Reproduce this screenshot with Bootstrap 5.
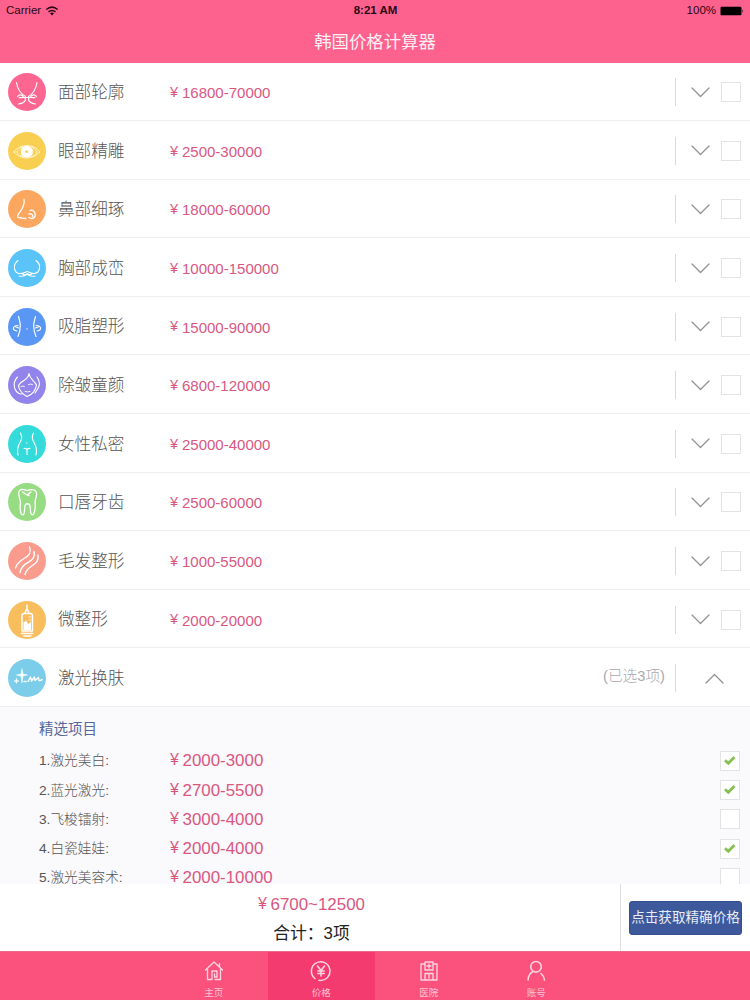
<!DOCTYPE html>
<html lang="zh-CN">
<head>
<meta charset="utf-8">
<meta name="viewport" content="width=device-width, initial-scale=1">
<title>韩国价格计算器</title>
<link href="https://cdn.jsdelivr.net/npm/bootstrap@5.3.0/dist/css/bootstrap.min.css" rel="stylesheet">
<style>
  body { font-family: "Liberation Sans", "Noto Sans CJK SC", sans-serif; height: 1000px; line-height: 1; color: #222; }
  svg { display: block; fill: none; stroke-linecap: round; stroke-linejoin: round; }
  .top-area { height: 62.5px; background: #fd628e; }
  .status-bar { height: 21px; font-size: 11.5px; padding: 0 5px 0 6px; color: #2a0713; }
  .status-bar > div { flex: 1 1 0; }
  .page-title { height: 41.5px; font-size: 17.4px; color: #fff0f5; padding-top: 1px; }
  .item-row { height: 58.6px; border-bottom: 1px solid #eeeeef; padding: 2px 9px 0 8px; }
  .disc { width: 38px; height: 38px; flex: none; stroke: #fff; stroke-width: 1.15; }
  .item-name { width: 112px; margin-left: 12px; padding-top: 2px; font-size: 16.6px; font-weight: 300; color: #555; }
  .price { color: #d9577f; font-size: 15px; }
  .yen { width: 12px; font-size: 14.5px; flex: none; padding-bottom: 1px; }
  .item-row .price { padding-top: 1px; }
  .rule { width: 1px; height: 28px; background: #d9d9dc; margin-right: 15px; }
  .chev { width: 19px; height: 11px; stroke: #929294; stroke-width: 1.3; margin-right: 11px; }
  .chev-open { margin: 0 17px 0 29px; }
  .tick-box { width: 20px; height: 20px; border: 1px solid #e3e3e6; background: #fff; flex: none; }
  .picked { font-size: 14.7px; color: #aaa8ad; font-weight: 300; margin-right: 10px; padding-bottom: 3px; }
  .detail { height: 176.9px; background: #faf9fc; padding: 0 10px 0 39px; }
  .detail-title { height: 39.2px; padding-top: 14px; font-size: 14.5px; color: #56679c; }
  .sub-row { height: 29.25px; }
  .sub-name { width: 131px; padding-top: 1px; font-size: 13.7px; font-weight: 300; color: #555; }
  .sub-row .price { font-size: 16.9px; padding-top: 2px; }
  .sub-row .yen, .total-sum .yen { width: 12.5px; font-size: 16px; padding-bottom: 3px; }
  .total-bar { height: 67.5px; }
  .total-sum { width: 621px; border-right: 1px solid #dedee0; padding: 6px 0 0 3px; }
  .total-sum .price { font-size: 16.9px; height: 32px; }
  .total-sum .count { font-size: 16.8px; height: 24px; color: #222; }
  .quote-btn.btn { width: 113px; height: 34px; background: #3e599b; border: 1px solid #344f91; border-radius: 3px; color: #e7ecf8; font-size: 13.6px; line-height: 1; white-space: nowrap; padding: 0; }
  .tab-bar { height: 48.5px; background: #fb527d; border-top: 1px solid #e9688b; }
  .tab-item { width: 107.5px; padding-top: 8px; color: #ffc6d6; font-size: 9.5px; text-decoration: none; }
  .tab-item.active { background: #f43b70; }
  .tab-item svg { width: 22px; height: 22px; stroke: #ffd5e1; stroke-width: 1.35; margin-bottom: 6px; }
</style>
</head>
<body class="bg-white overflow-hidden m-0">
<svg width="0" height="0" class="position-absolute">
  <symbol id="down" viewBox="0 0 19 11"><path d="M1 1l8.5 8.5L18 1"/></symbol>
  <symbol id="up" viewBox="0 0 19 11"><path d="M1 10l8.5-8.5L18 10"/></symbol>
  <symbol id="tick" viewBox="0 0 18 18"><path d="M4 8.300l3.300 3 6.200-6.300" stroke="#86c053" stroke-width="2.800" stroke-linecap="butt" stroke-linejoin="miter"/></symbol>
</svg>

<header class="top-area">
  <div class="status-bar d-flex align-items-center">
    <div class="d-flex align-items-center"><span>Carrier</span>
      <svg width="14" height="10" viewBox="0 0 14 10" stroke="#2a0713" stroke-width="1.500" class="ms-1"><path d="M1.300 3.500q5.700-4.700 11.400 0M3.500 5.900q3.500-2.900 7 0" stroke-linecap="butt"/><path d="M5 7.300q2-1.400 4 0L7 9.500z" fill="#2a0713" stroke="none"/></svg>
    </div>
    <span class="fw-bold">8:21 AM</span>
    <div class="d-flex align-items-center justify-content-end"><span>100%</span>
      <svg width="25" height="10" viewBox="0 0 25 10" class="ms-1"><rect x=".5" y=".8" width="21" height="8.400" rx="1.200" fill="#000"/><path d="M22.500 3.300q1.500 1.700 0 3.400z" fill="#000"/></svg>
    </div>
  </div>
  <h1 class="page-title d-flex align-items-center justify-content-center m-0 fw-normal">韩国价格计算器</h1>
</header>

<main>
  <div class="item-row d-flex align-items-center">
    <svg class="disc" viewBox="0 0 38 38"><circle cx="19" cy="19" r="19" fill="#fc6690" stroke="none"/><path d="M8.500 9.500C9.500 16 13 21 17.500 23.500M29 9.500C28 16 24.500 21 20.500 23.500M9.500 23.500c2-2.500 4.500-2 6 .5M28.500 23.500c-2-2.500-4.500-2-6 .5M11 24.500c3.500.8 6-1.500 6.500 1 .5 3-3 5-7 5.500M27 24.500c-3.500.8-6-1.500-6.500 1-.5 3 3 5 7 5.500M17 24.500h4"/></svg>
    <span class="item-name">面部轮廓</span><span class="price d-flex align-items-center"><span class="yen">¥</span>16800-70000</span>
    <span class="rule ms-auto"></span><svg class="chev"><use href="#down"/></svg><span class="tick-box"></span>
  </div>
  <div class="item-row d-flex align-items-center">
    <svg class="disc" viewBox="0 0 38 38"><circle cx="19" cy="19" r="19" fill="#f9cf51" stroke="none"/><g stroke="#fff8dc"><path d="M6 20C12 11.500 25 11 32 20 24 28 13 28 6 20z" stroke-width=".9"/><path d="M9 20q3-5 5.500-5.500-2.500 5 0 10.500Q11 24 9 20zM29 20q-3-5-5.500-5.500 2.500 5 0 10.500Q27 24 29 20z" stroke-width=".7"/></g><circle cx="18.700" cy="19.700" r="5.400" fill="#fff"/><circle cx="18.700" cy="19.700" r="1.400" fill="#f9cf51" stroke="none"/></svg>
    <span class="item-name">眼部精雕</span><span class="price d-flex align-items-center"><span class="yen">¥</span>2500-30000</span>
    <span class="rule ms-auto"></span><svg class="chev"><use href="#down"/></svg><span class="tick-box"></span>
  </div>
  <div class="item-row d-flex align-items-center">
    <svg class="disc" viewBox="0 0 38 38"><circle cx="19" cy="19" r="19" fill="#fba75f" stroke="none"/><path d="M16 9.500C17 15 14 19 10.500 24c-2 3-.5 3.700 2.500 3.800 1.500.2 3 1.200 5 .5M21 24c3-.8 4 1 3.500 2.500M22 20.500c4-1.500 6.500 4 4.500 6.500-1.500 2-4 1.500-5.500.5" stroke-width="1.300"/></svg>
    <span class="item-name">鼻部细琢</span><span class="price d-flex align-items-center"><span class="yen">¥</span>18000-60000</span>
    <span class="rule ms-auto"></span><svg class="chev"><use href="#down"/></svg><span class="tick-box"></span>
  </div>
  <div class="item-row d-flex align-items-center">
    <svg class="disc" viewBox="0 0 38 38"><circle cx="19" cy="19" r="19" fill="#5ac3f8" stroke="none"/><path d="M10 11.500C4 16 6 25 12.500 24.500c3.500 0 6-2 6.700-2s3.500 2 6.500 2C32 24.500 34 16 28 11.500M11 27q5 1 8-1.700 3.500 2.700 8 1.700M14.500 25q3 1.500 4.700-.5 2 2 4.500.5"/></svg>
    <span class="item-name">胸部成峦</span><span class="price d-flex align-items-center"><span class="yen">¥</span>10000-150000</span>
    <span class="rule ms-auto"></span><svg class="chev"><use href="#down"/></svg><span class="tick-box"></span>
  </div>
  <div class="item-row d-flex align-items-center">
    <svg class="disc" viewBox="0 0 38 38"><circle cx="19" cy="19" r="19" fill="#5a97f5" stroke="none"/><path d="M10.500 8.500c2 7 3 11-.5 20M27.500 8.500c-2 7-3 11 .5 20M10 17.500c-6 .5-6 4.500-1 5.500M28 17.500c6 .5 6 4.500 1 5.500M7 18.500l3.500 1.500M31 18.500L27.500 20"/><circle cx="19" cy="21" r=".2"/></svg>
    <span class="item-name">吸脂塑形</span><span class="price d-flex align-items-center"><span class="yen">¥</span>15000-90000</span>
    <span class="rule ms-auto"></span><svg class="chev"><use href="#down"/></svg><span class="tick-box"></span>
  </div>
  <div class="item-row d-flex align-items-center">
    <svg class="disc" viewBox="0 0 38 38"><circle cx="19" cy="19" r="19" fill="#9184ea" stroke="none"/><path d="M21 7.500C20.500 15 12 14 10.500 20c1 5 4 8 8.500 10.500C24 29 28 24 28.500 19 26 14 22 14 21 7.500M9.500 11C3 18 7 28 14 28M29 11c5 7 1 12-2 16"/><path d="M20.500 18.500q2-1 4 0M13 20.500q2-1 3.500 0M17 25.500q2.500 1 5 0" stroke-width=".9"/></svg>
    <span class="item-name">除皱童颜</span><span class="price d-flex align-items-center"><span class="yen">¥</span>6800-120000</span>
    <span class="rule ms-auto"></span><svg class="chev"><use href="#down"/></svg><span class="tick-box"></span>
  </div>
  <div class="item-row d-flex align-items-center">
    <svg class="disc" viewBox="0 0 38 38"><circle cx="19" cy="19" r="19" fill="#35dada" stroke="none"/><path d="M12.500 8C17 17 7 18 10 30M25.500 8C21 17 31 18 28 30M16 23.500q2.500-.5 3 1.500.5-2 3-1.500M19 25v4.500"/><circle cx="18.700" cy="18" r=".2"/></svg>
    <span class="item-name">女性私密</span><span class="price d-flex align-items-center"><span class="yen">¥</span>25000-40000</span>
    <span class="rule ms-auto"></span><svg class="chev"><use href="#down"/></svg><span class="tick-box"></span>
  </div>
  <div class="item-row d-flex align-items-center">
    <svg class="disc" viewBox="0 0 38 38"><circle cx="19" cy="19" r="19" fill="#97dc82" stroke="none"/><path d="M11.500 7.500c3-3 5.500 0 8 0s6-3 8.500 1c2 4-1 7-1 11 .5 4 0 8-1 11-1 2-3 1.500-3.300-.5l-.7-7c-.5-3-4.500-3-5 0l-.7 7c-.3 2-2.300 2.500-3.300.5-1-3-1-7-.5-11 0-4-3.500-8-1-12zM14.500 9l4.500 3 4-3M19 12l2 .5" stroke-width="1.300"/></svg>
    <span class="item-name">口唇牙齿</span><span class="price d-flex align-items-center"><span class="yen">¥</span>2500-60000</span>
    <span class="rule ms-auto"></span><svg class="chev"><use href="#down"/></svg><span class="tick-box"></span>
  </div>
  <div class="item-row d-flex align-items-center">
    <svg class="disc" viewBox="0 0 38 38"><circle cx="19" cy="19" r="19" fill="#f99b8d" stroke="none"/><path d="M21.500 5c2.500 6-1 9-5.500 11.500C12 19 9 21 7.500 26M26 9.500c1.500 6-2 8.500-6 11-4 2-7 4.500-8 10M30 13c1 6-2 8-5.500 10.500-3.500 2-6 4-7.500 9" stroke-width="1.400"/></svg>
    <span class="item-name">毛发整形</span><span class="price d-flex align-items-center"><span class="yen">¥</span>1000-55000</span>
    <span class="rule ms-auto"></span><svg class="chev"><use href="#down"/></svg><span class="tick-box"></span>
  </div>
  <div class="item-row d-flex align-items-center">
    <svg class="disc" viewBox="0 0 38 38"><circle cx="19" cy="19" r="19" fill="#f8bd5d" stroke="none"/><path d="M19 4v5M17 12l1.200-3h1.600L21 12M14 30V14.500q0-2 2-2h6q2.500 0 2.500 2V30zM15 30h8.500M13.500 32.500h11.500M15.500 35h7.500" stroke-width="1.500"/><path d="M15.500 21l3-1 1.500 3 3-2v8h-7.500z" fill="#fff" stroke="none"/><path d="M21 16h2M21 19h2" stroke-width=".8"/></svg>
    <span class="item-name">微整形</span><span class="price d-flex align-items-center"><span class="yen">¥</span>2000-20000</span>
    <span class="rule ms-auto"></span><svg class="chev"><use href="#down"/></svg><span class="tick-box"></span>
  </div>
  <div class="item-row d-flex align-items-center">
    <svg class="disc" viewBox="0 0 38 38"><circle cx="19" cy="19" r="19" fill="#7ccdea" stroke="none"/><path d="M14 10l1 5 4.500 1-4.500 1-1 7-1-7-4.500-1 4.500-1zM8.500 19.500l.6 1.900 1.900.6-1.900.6-.6 1.900-.6-1.900L6 22l1.900-.6z" fill="#fff" stroke-width=".5"/><path d="M16 22.500h2M20 22.500l2.500-4.500 1 4 3-4 .5 3.500 3.500-3 .5 3q2 .5 3-1" stroke-width="1.400"/></svg>
    <span class="item-name">激光换肤</span>
    <span class="picked ms-auto">(已选3项)</span><span class="rule m-0"></span><svg class="chev chev-open"><use href="#up"/></svg>
  </div>

  <section class="detail overflow-hidden">
    <h2 class="detail-title m-0 fw-normal">精选项目</h2>
    <div class="sub-row d-flex align-items-center"><span class="sub-name">1.激光美白:</span><span class="price d-flex align-items-center"><span class="yen">¥</span>2000-3000</span><span class="tick-box ms-auto"><svg width="18" height="18"><use href="#tick"/></svg></span></div>
    <div class="sub-row d-flex align-items-center"><span class="sub-name">2.蓝光激光:</span><span class="price d-flex align-items-center"><span class="yen">¥</span>2700-5500</span><span class="tick-box ms-auto"><svg width="18" height="18"><use href="#tick"/></svg></span></div>
    <div class="sub-row d-flex align-items-center"><span class="sub-name">3.飞梭镭射:</span><span class="price d-flex align-items-center"><span class="yen">¥</span>3000-4000</span><span class="tick-box ms-auto"></span></div>
    <div class="sub-row d-flex align-items-center"><span class="sub-name">4.白瓷娃娃:</span><span class="price d-flex align-items-center"><span class="yen">¥</span>2000-4000</span><span class="tick-box ms-auto"><svg width="18" height="18"><use href="#tick"/></svg></span></div>
    <div class="sub-row d-flex align-items-center"><span class="sub-name">5.激光美容术:</span><span class="price d-flex align-items-center"><span class="yen">¥</span>2000-10000</span><span class="tick-box ms-auto"></span></div>
  </section>
</main>

<section class="total-bar d-flex bg-white">
  <div class="total-sum d-flex flex-column align-items-center">
    <div class="price d-flex align-items-center"><span class="yen">¥</span>6700~12500</div>
    <div class="count d-flex align-items-center">合计：3项</div>
  </div>
  <div class="flex-grow-1 d-flex align-items-center justify-content-center"><button type="button" class="btn quote-btn">点击获取精确价格</button></div>
</section>

<nav class="tab-bar d-flex justify-content-center">
  <a class="tab-item d-flex flex-column align-items-center" href="#"><svg viewBox="0 0 22 22"><path d="M2.500 10L11 2l8.500 8M16.500 7V3.500M4.500 9v10.500h4.500V11h5v6h-2.500v-3M17.500 9v10.500H12"/></svg>主页</a>
  <a class="tab-item active d-flex flex-column align-items-center" href="#"><svg viewBox="0 0 22 22"><path d="M5 18.500a9.300 9.300 0 1 1 4 1.800" stroke-width="1.500"/><path d="M7.500 6l3.500 4.500L14.500 6M11 10.500V16M7.800 11h6.400M7.800 13.500h6.400" stroke-width="1.600"/></svg>价格</a>
  <a class="tab-item d-flex flex-column align-items-center" href="#"><svg viewBox="0 0 22 22"><path d="M7 4H3v16h16V4h-4M7 2h8v8H7zM11 4v4M9 6h4M7 20v-6.500h8V20M11 14v4M3 20h16"/></svg>医院</a>
  <a class="tab-item d-flex flex-column align-items-center" href="#"><svg viewBox="0 0 22 22"><circle cx="11" cy="6.800" r="5.300" stroke-width="1.600"/><path d="M8 11.500Q3.500 14 3 20M16 13.500q3 2.500 3.500 6.500" stroke-width="1.600"/></svg>账号</a>
</nav>
<script src="https://cdn.jsdelivr.net/npm/bootstrap@5.3.0/dist/js/bootstrap.bundle.min.js"></script>
</body>
</html>
